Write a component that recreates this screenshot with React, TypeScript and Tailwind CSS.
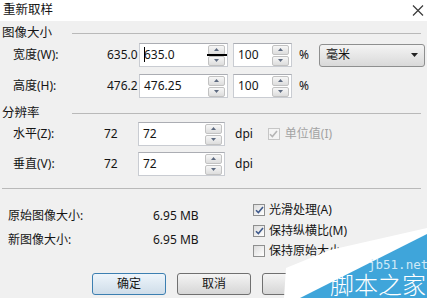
import type { ReactNode } from "react";

function Spin() {
  return (
    <div className="mr-[2px] flex w-[17px] flex-col gap-px">
      {[0, 1].map((i) => (
        <div
          key={i}
          className="flex h-[10px] items-center justify-center rounded-[2px] border border-[#c2c2c2] bg-linear-to-b from-[#f7f7f7] to-[#dddddd]"
        >
          <svg width="5" height="3" viewBox="0 0 5 3">
            <path d={i === 0 ? "M0 3L2.5 0L5 3Z" : "M0 0L2.5 3L5 0Z"} fill="#5d6a80" />
          </svg>
        </div>
      ))}
    </div>
  );
}

function NumBox({ width, value, caret }: { width: string; value: string; caret?: boolean }) {
  return (
    <div
      className={`relative flex h-[24px] items-center border border-[#c9ccd2] border-t-[#abadb3] bg-white ${width}`}
    >
      <span className="relative flex-1 pl-[4px]">
        {caret && <span className="absolute left-[4px] top-[-2px] h-[15px] w-px bg-black" />}
        {value}
      </span>
      <Spin />
      {caret && <span className="absolute right-0 top-[10px] h-[2px] w-[20px] bg-black" />}
    </div>
  );
}

function Check({ checked, disabled }: { checked?: boolean; disabled?: boolean }) {
  return (
    <span
      className={`flex h-[12px] w-[12px] items-center justify-center border ${
        disabled ? "border-[#c6c6c6] bg-[#f4f4f4]" : "border-[#8e8f8f] bg-linear-to-br from-[#dcdcdc] to-[#ffffff]"
      }`}
    >
      {checked && (
        <svg width="9" height="8" viewBox="0 0 9 8">
          <path
            d="M1 4.2L3.4 6.6L8 1"
            fill="none"
            stroke={disabled ? "#b5b5b5" : "#3f5a8c"}
            strokeWidth="1.6"
          />
        </svg>
      )}
    </span>
  );
}

function GroupHeader({ label, top }: { label: string; top: string }) {
  return (
    <div className={`flex h-[16px] items-center pl-[2px] pr-[6px] ${top}`}>
      <span className="w-[70px] text-[12.5px]">{label}</span>
      <div className="h-px flex-1 bg-[#b9b9b9]" />
    </div>
  );
}

function Button({ children, primary }: { children: ReactNode; primary?: boolean }) {
  return (
    <div
      className={`flex h-[22px] w-[74px] items-center justify-center rounded-[3px] border ${
        primary
          ? "border-[#3c7fb1] bg-linear-to-b from-[#eef5fb] to-[#cfdde9]"
          : "border-[#707070] bg-linear-to-b from-[#f4f4f4] to-[#d6d6d6]"
      }`}
    >
      {children}
    </div>
  );
}

export default function App() {
  return (
    <div className="relative h-[298px] w-[427px] overflow-hidden bg-[#f0f0f0] font-['Noto_Sans','Noto_Sans_CJK_SC',sans-serif] text-[12px] leading-none text-[#151515]">
      <div className="flex h-[21px] items-center justify-between bg-white pl-[3px] pr-[3px]">
        <span className="text-[12.5px]">重新取样</span>
        <svg width="12" height="11" viewBox="0 0 12 11">
          <path d="M1 0.5L11 10.5M11 0.5L1 10.5" stroke="#3a3a3a" strokeWidth="1.2" />
        </svg>
      </div>

      <GroupHeader label="图像大小" top="mt-[4px]" />
      <div className="mt-[2px] flex h-[24px] items-center">
        <span className="w-[105px] pl-[13px]">宽度(W):</span>
        <span className="w-[34px] pl-[2px]">635.0</span>
        <NumBox width="w-[89px]" value="635.0" caret />
        <NumBox width="ml-[5px] w-[59px]" value="100" />
        <span className="ml-[7px] w-[12px]">%</span>
        <div className="ml-[8px] flex h-[23px] w-[106px] items-center justify-between rounded-[3px] border border-[#8e8f8f] bg-linear-to-b from-[#f4f4f4] to-[#d9d9d9] pl-[6px] pr-[6px]">
          <span>毫米</span>
          <svg width="7" height="4" viewBox="0 0 7 4">
            <path d="M0 0L3.5 4L7 0Z" fill="#222" />
          </svg>
        </div>
      </div>
      <div className="mt-[7px] flex h-[24px] items-center">
        <span className="w-[105px] pl-[13px]">高度(H):</span>
        <span className="w-[34px] pl-[2px]">476.2</span>
        <NumBox width="w-[89px]" value="476.25" />
        <NumBox width="ml-[5px] w-[59px]" value="100" />
        <span className="ml-[7px] w-[12px]">%</span>
      </div>

      <GroupHeader label="分辨率" top="mt-[7px]" />
      <div className="mt-px flex h-[24px] items-center">
        <span className="w-[104px] pl-[13px]">水平(Z):</span>
        <span className="w-[34px]">72</span>
        <NumBox width="w-[87px]" value="72" />
        <span className="ml-[10px]">dpi</span>
        <span className="ml-[15px]">
          <Check checked disabled />
        </span>
        <span className="ml-[5px] text-[#a3a3a3]">单位值(I)</span>
      </div>
      <div className="mt-[6px] flex h-[24px] items-center">
        <span className="w-[104px] pl-[13px]">垂直(V):</span>
        <span className="w-[34px]">72</span>
        <NumBox width="w-[87px]" value="72" />
        <span className="ml-[10px]">dpi</span>
      </div>

      <div className="ml-[2px] mr-[6px] mt-[12px] h-px bg-[#b9b9b9]" />
      <div className="flex h-[84px]">
        <div className="flex w-[253px] flex-col gap-[8px] pl-[8px] pt-[19px]">
          <div className="flex h-[16px] items-center">
            <span className="w-[145px]">原始图像大小:</span>
            <span>6.95 MB</span>
          </div>
          <div className="flex h-[16px] items-center">
            <span className="w-[145px]">新图像大小:</span>
            <span>6.95 MB</span>
          </div>
        </div>
        <div className="flex flex-col pt-[11px]">
          {[
            ["光滑处理(A)", true],
            ["保持纵横比(M)", true],
            ["保持原始大小", false],
          ].map(([label, checked]) => (
            <div key={label as string} className="flex h-[20.5px] items-center gap-[4px]">
              <Check checked={checked as boolean} />
              <span>{label as string}</span>
            </div>
          ))}
        </div>
      </div>
      <div className="flex gap-[11px] pl-[92px]">
        <Button primary>确定</Button>
        <Button>取消</Button>
        <Button>帮助</Button>
      </div>

      <div className="absolute left-[280px] top-[222px] h-[76px] w-[147px]">
        <svg width="147" height="76" viewBox="0 0 147 76" className="absolute inset-0">
          <polygon points="4,76 6,46 50,28 147,6 147,76" fill="#ffffff" />
          <polygon points="20,76 147,12 147,76" fill="#3fa5da" />
        </svg>
        <span className="absolute left-[88px] top-[37px] h-[12px] font-['DejaVu_Sans_Mono',monospace] text-[12.5px] leading-[12px] text-[#cfe9f7]">
          jb51.net
        </span>
        <span className="absolute left-[50px] top-[52px] h-[20px] font-['Noto_Sans_CJK_SC',sans-serif] text-[24px] font-light leading-[20px] text-white">
          脚本之家
        </span>
      </div>
    </div>
  );
}
